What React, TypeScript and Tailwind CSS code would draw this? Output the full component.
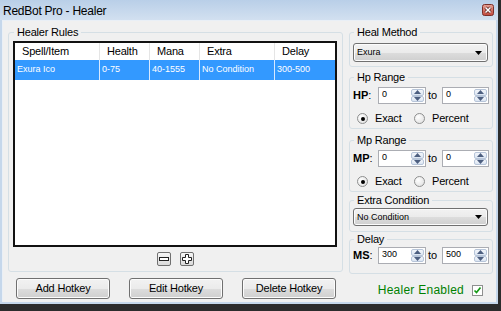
import React from "react";

const BTN_BG =
  "bg-[linear-gradient(#f2f2f2,#ebebeb_50%,#dddddd_50%,#cfcfcf)] shadow-[inset_0_0_0_1px_#fcfcfc]";

function Legend({ children }: { children: React.ReactNode }) {
  return (
    <legend className="ml-[1px] px-[3px] text-[11px] leading-[13px] tracking-[-0.2px] text-black">
      {children}
    </legend>
  );
}

function SpinArrow({ up }: { up?: boolean }) {
  return (
    <div className="flex-1 flex items-center justify-center rounded-[2px] border border-[#b7c5d9] bg-[linear-gradient(#f3f6fb,#dbe5f2)]">
      <svg width="7" height="4" viewBox="0 0 7 4">
        <path d={up ? "M0 4 L3.5 0 L7 4 Z" : "M0 0 L7 0 L3.5 4 Z"} fill="#4d5f80" />
      </svg>
    </div>
  );
}

function Spin({ value, className }: { value: string; className: string }) {
  return (
    <div className={`flex h-[17px] border border-[#abadb3] bg-white ${className}`}>
      <div className="flex-1 pl-[3px] pt-[1px] text-[9px] leading-[10px] text-black">{value}</div>
      <div className="w-[15px] flex flex-col p-[1px]">
        <SpinArrow up />
        <SpinArrow />
      </div>
    </div>
  );
}

function Radio({ checked, label }: { checked?: boolean; label: string }) {
  return (
    <div className="flex items-center">
      <span className="w-[11px] h-[11px] rounded-full border border-[#8e8f8f] bg-[radial-gradient(circle_at_35%_35%,#ffffff,#dcdcdc)] flex items-center justify-center">
        {checked && <span className="w-[4px] h-[4px] rounded-full bg-black" />}
      </span>
      <span className="ml-[7px] text-[11px] leading-[13px] tracking-[-0.2px] text-black">{label}</span>
    </div>
  );
}

function Combo({ value, className }: { value: string; className: string }) {
  return (
    <div className={`flex items-center rounded-[3px] border border-[#707070] pl-[3px] pr-[5px] ${BTN_BG} ${className}`}>
      <span className="flex-1 text-[9px] leading-[11px] text-black">{value}</span>
      <svg width="7" height="4" viewBox="0 0 7 4">
        <path d="M0 0 H7 L3.5 4 Z" fill="#000" />
      </svg>
    </div>
  );
}

function RangeRow({ label, a, b }: { label: string; a: string; b: string }) {
  return (
    <div className="flex items-center">
      <span className="w-[25px] text-[11px] leading-[13px] text-black">
        <b>{label}</b>:
      </span>
      <Spin value={a} className="w-[48px]" />
      <span className="w-[16px] pl-[2px] text-[11px] leading-[13px] text-black">to</span>
      <Spin value={b} className="w-[47px]" />
    </div>
  );
}

function Button({ children }: { children: React.ReactNode }) {
  return (
    <div
      className={`w-[94px] h-[21px] flex items-center justify-center rounded-[3px] border border-[#707070] text-[11px] tracking-[-0.2px] text-black ${BTN_BG}`}
    >
      {children}
    </div>
  );
}

function SmallBtn({ plus }: { plus?: boolean }) {
  return (
    <div className="w-[14px] h-[14px] rounded-[2px] border border-[#707070] bg-[linear-gradient(#f6f6f6,#dadada)] flex items-center justify-center">
      <svg width="10" height="10" viewBox="0 0 10 10">
        {plus ? (
          <path
            d="M3.5 0.5 H6.5 V3.5 H9.5 V6.5 H6.5 V9.5 H3.5 V6.5 H0.5 V3.5 H3.5 Z"
            fill="#fff"
            stroke="#222"
          />
        ) : (
          <rect x="0.5" y="3.5" width="9" height="3" fill="#fff" stroke="#222" />
        )}
      </svg>
    </div>
  );
}

const cols = [
  { h: "Spell/Item", v: "Exura Ico", w: "w-[85px]" },
  { h: "Health", v: "0-75", w: "w-[50px]" },
  { h: "Mana", v: "40-1555", w: "w-[50px]" },
  { h: "Extra", v: "No Condition", w: "w-[75px]" },
];

export default function App() {
  return (
    <div className="w-[501px] h-[311px] bg-[#2c2c2c] font-['Liberation_Sans',Arial,sans-serif] overflow-hidden">
      <div className="w-[498px] h-[304px] flex flex-col bg-[#c5d7eb]">
        {/* title bar */}
        <div className="h-[20px] flex items-center pl-[3px] pr-[4px] bg-[linear-gradient(#b9cfe8,#d2e0f0)]">
          <span className="flex-1 text-[12px] tracking-[-0.25px] text-black pt-[1px]">RedBot Pro - Healer</span>
          <svg width="12" height="12" viewBox="0 0 12 12">
            <defs>
              <linearGradient id="cg" x1="0" y1="0" x2="0" y2="1">
                <stop offset="0" stopColor="#e8a396" />
                <stop offset="1" stopColor="#c0473b" />
              </linearGradient>
            </defs>
            <rect x="0.5" y="0.5" width="11" height="11" rx="2" fill="url(#cg)" stroke="#7a2f2a" />
            <path d="M3.5 3.5 L8.5 8.5 M8.5 3.5 L3.5 8.5" stroke="#5a1d1a" strokeWidth="3" />
            <path d="M3.5 3.5 L8.5 8.5 M8.5 3.5 L3.5 8.5" stroke="#fff" strokeWidth="1.5" />
          </svg>
        </div>
        {/* content */}
        <div className="flex-1 ml-[2px] mr-[2px] mb-[2px] border-l border-t border-[#e9eff6] bg-[#f0f0f0] flex pl-[5px] pr-[3px]">
          {/* left column */}
          <div className="w-[335px] flex flex-col">
            <fieldset className="mt-[5px] h-[246px] pl-[4px] pr-[5px] border border-[#d5dfe5] rounded-[3px] flex flex-col">
              <Legend>Healer Rules</Legend>
              <div className="mt-[2px] h-[206px] border-2 border-[#111] bg-white flex flex-col">
                <div className="h-[17px] flex text-[11px] tracking-[-0.2px] text-black">
                  {cols.map((c) => (
                    <div key={c.h} className={`${c.w} pl-[7px] border-r border-[#e5e5e5] flex items-center`}>
                      {c.h}
                    </div>
                  ))}
                  <div className="flex-1 pl-[7px] flex items-center">Delay</div>
                </div>
                <div className="h-[20px] flex bg-[#3399ff] text-white text-[9px]">
                  {cols.map((c) => (
                    <div key={c.h} className={`${c.w} pl-[2px] border-r border-[#d8e9ff] flex items-center`}>
                      {c.v}
                    </div>
                  ))}
                  <div className="flex-1 pl-[2px] flex items-center">300-500</div>
                </div>
              </div>
              <div className="mt-[5px] flex justify-center gap-[9px]">
                <SmallBtn />
                <SmallBtn plus />
              </div>
            </fieldset>
            <div className="mt-[6px] pl-[8px] flex gap-[19px]">
              <Button>Add Hotkey</Button>
              <Button>Edit Hotkey</Button>
              <Button>Delete Hotkey</Button>
            </div>
          </div>
          {/* right column */}
          <div className="ml-[6px] w-[144px] flex flex-col">
            <fieldset className="mt-[5px] h-[41px] pl-[3px] pr-[4px] border border-[#d5dfe5] rounded-[3px] flex flex-col">
              <Legend>Heal Method</Legend>
              <Combo value="Exura" className="mt-[4px] h-[19px]" />
            </fieldset>
            <fieldset className="mt-[4px] h-[58px] pl-[3px] pr-[2px] border border-[#d5dfe5] rounded-[3px] flex flex-col">
              <Legend>Hp Range</Legend>
              <div className="mt-[3px]">
                <RangeRow label="HP" a="0" b="0" />
              </div>
              <div className="mt-[8px] pl-[4px] flex">
                <div className="w-[57px]">
                  <Radio checked label="Exact" />
                </div>
                <Radio label="Percent" />
              </div>
            </fieldset>
            <fieldset className="mt-[5px] h-[58px] pl-[3px] pr-[2px] border border-[#d5dfe5] rounded-[3px] flex flex-col">
              <Legend>Mp Range</Legend>
              <div className="mt-[3px]">
                <RangeRow label="MP" a="0" b="0" />
              </div>
              <div className="mt-[8px] pl-[4px] flex">
                <div className="w-[57px]">
                  <Radio checked label="Exact" />
                </div>
                <Radio label="Percent" />
              </div>
            </fieldset>
            <fieldset className="mt-[2px] h-[38px] pl-[3px] pr-[4px] border border-[#d5dfe5] rounded-[3px] flex flex-col">
              <Legend>Extra Condition</Legend>
              <Combo value="No Condition" className="mt-[1px] h-[18px]" />
            </fieldset>
            <fieldset className="mt-[1px] h-[41px] pl-[3px] pr-[2px] border border-[#d5dfe5] rounded-[3px] flex flex-col">
              <Legend>Delay</Legend>
              <div className="mt-[1px]">
                <RangeRow label="MS" a="300" b="500" />
              </div>
            </fieldset>
            <div className="mt-[9px] flex items-center justify-end pr-[10px]">
              <span className="text-[12px] leading-[14px] tracking-[0.25px] text-[#008000]">Healer Enabled</span>
              <span className="ml-[8px] w-[11px] h-[11px] border border-[#8e8f8f] bg-white flex items-center justify-center">
                <svg width="9" height="9" viewBox="0 0 9 9">
                  <path d="M1.5 4.5 L3.5 6.5 L7.5 1.5" stroke="#159a15" strokeWidth="1.7" fill="none" />
                </svg>
              </span>
            </div>
          </div>
        </div>
      </div>
    </div>
  );
}
